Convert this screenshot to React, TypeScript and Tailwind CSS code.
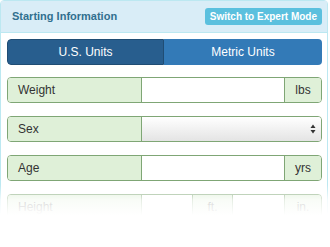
import React from "react";

const font = { fontFamily: '"Liberation Sans", Arial, sans-serif' };

function Row({ label, children }: { label: string; children: React.ReactNode }) {
  return (
    <div className="flex h-[26px] rounded-[4px] border border-[#7fa675] overflow-hidden">
      <div className="w-[134px] shrink-0 bg-[#dff0d8] border-r border-[#7fa675] flex items-center pl-[10px] text-[12px] text-[#333]">
        {label}
      </div>
      {children}
    </div>
  );
}

export default function App() {
  return (
    <div className="w-[330px] h-[247px] relative overflow-hidden bg-white" style={font}>
      <div className="w-[328px] border border-[#bce8f1] rounded-t-[4px] h-[260px]">
        <div className="h-[32px] bg-[#d9edf7] border-b border-[#bce8f1] flex items-center justify-between pl-[11px] pr-[5px]">
          <span className="text-[11px] font-bold text-[#31708f]">Starting Information</span>
          <span className="h-[17px] px-[5px] rounded-[3px] bg-[#5bc0de] text-white text-[10px] font-bold flex items-center">
            Switch to Expert Mode
          </span>
        </div>
        <div className="pl-[6px] pr-[5px] pt-[6px] flex flex-col">
          <div className="flex h-[26px] rounded-[4px] overflow-hidden text-[12px] text-white">
            <div className="w-[157px] bg-[#285e8e] border border-[#204d74] rounded-l-[4px] flex items-center justify-center">U.S. Units</div>
            <div className="flex-1 bg-[#337ab7] flex items-center justify-center">Metric Units</div>
          </div>
          <div className="mt-[12px] flex flex-col gap-[13px]">
            <Row label="Weight">
              <div className="flex-1 bg-white" />
              <div className="w-[37px] bg-[#dff0d8] border-l border-[#7fa675] flex items-center justify-center text-[12px] text-[#333]">lbs</div>
            </Row>
            <Row label="Sex">
              <div className="flex-1 bg-gradient-to-b from-white to-[#e4e4e4] flex items-center justify-end pr-[5px]">
                <svg width="6" height="10" viewBox="0 0 6 10">
                  <path d="M3 0.5 L5.5 4 H0.5 Z" fill="#333" />
                  <path d="M3 9.5 L5.5 6 H0.5 Z" fill="#333" />
                </svg>
              </div>
            </Row>
            <Row label="Age">
              <div className="flex-1 bg-white" />
              <div className="w-[37px] bg-[#dff0d8] border-l border-[#7fa675] flex items-center justify-center text-[12px] text-[#333]">yrs</div>
            </Row>
            <Row label="Height">
              <div className="w-[50px] bg-white" />
              <div className="w-[41px] bg-[#dff0d8] border-x border-[#7fa675] flex items-center justify-center text-[12px] text-[#333]">ft.</div>
              <div className="flex-1 bg-white" />
              <div className="w-[37px] bg-[#dff0d8] border-l border-[#7fa675] flex items-center justify-center text-[12px] text-[#333]">in.</div>
            </Row>
          </div>
        </div>
      </div>
      <div className="absolute left-0 right-0 top-[185px] h-[30px] bg-gradient-to-b from-[rgba(255,255,255,0)] via-[rgba(255,255,255,0.8)] to-white" />
      <div className="absolute left-0 right-0 top-[215px] bottom-0 bg-white" />
    </div>
  );
}
